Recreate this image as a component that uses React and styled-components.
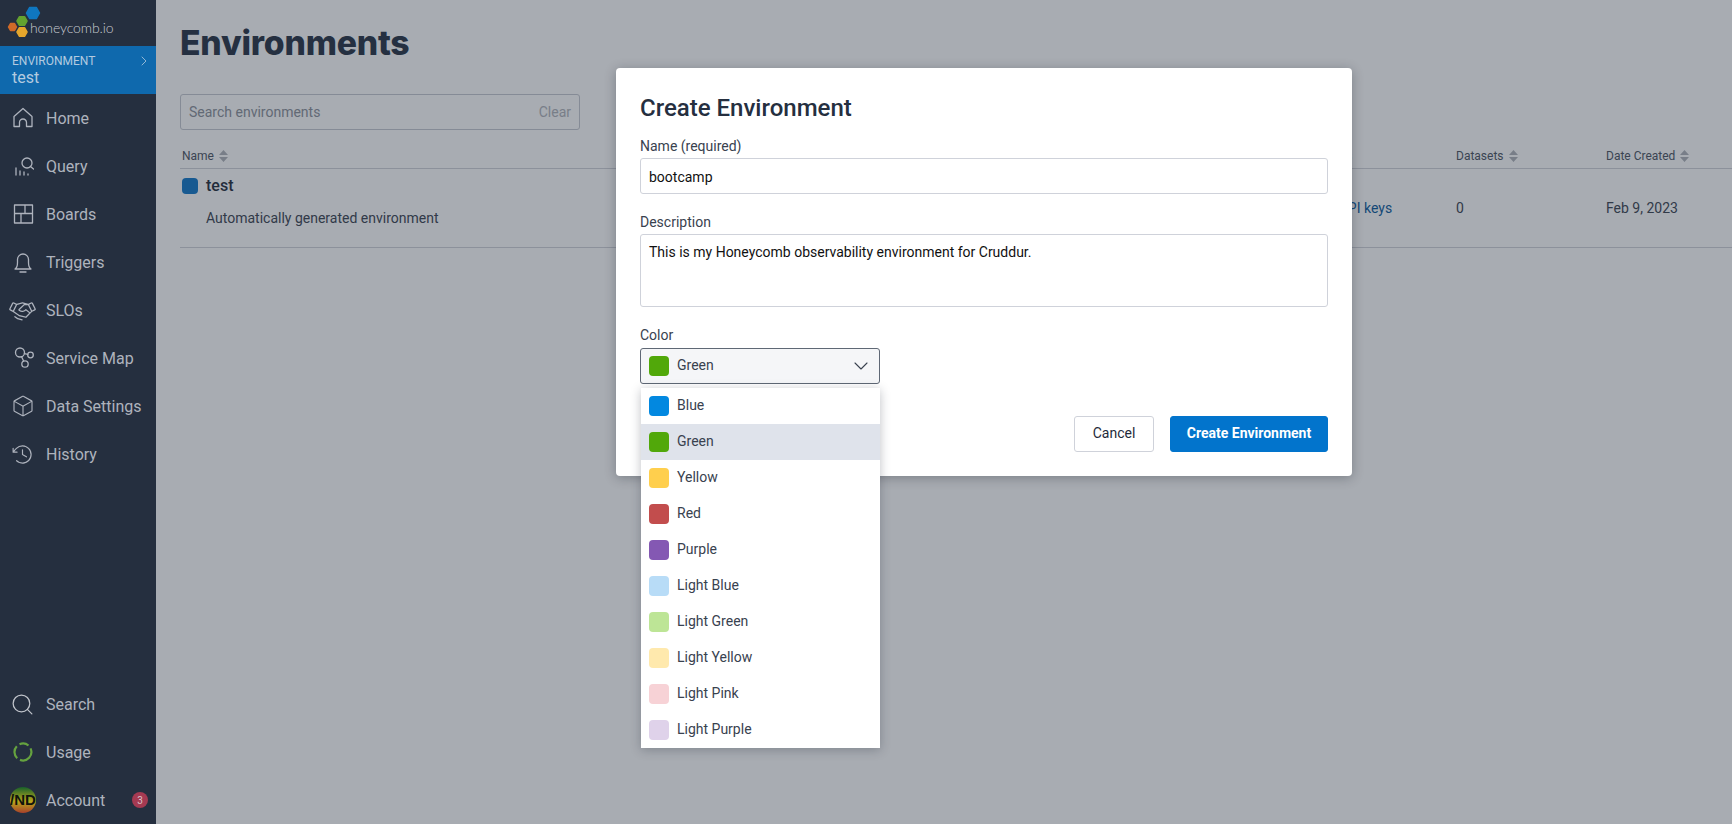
import React from "react";
import styled, { createGlobalStyle } from "styled-components";
import { Search, ChevronRight, ChevronDown } from "lucide-react";
import { PiHandshakeLight, PiCubeLight, PiClockCounterClockwiseLight } from "react-icons/pi";

const Global = createGlobalStyle`
  * { box-sizing: border-box; }
  html, body { margin: 0; height: 100%; }
  body { font-family: Roboto, "Liberation Sans", sans-serif; background: #fff; overflow: hidden; }
`;

const Page = styled.div`display: flex; width: 1732px; height: 824px; overflow: hidden;`;
const Sidebar = styled.nav`width: 156px; flex: none; background: #252f3f; display: flex; flex-direction: column; color: #aeb3bd;`;
const LogoBar = styled.div`height: 46px; display: flex; align-items: flex-start; position: relative;`;
const LogoMark = styled.svg`width: 38px; height: 40px; flex: none; margin-left: 6px;`;
const LogoText = styled.span`
  font-family: Lato, sans-serif; font-weight: 300; font-size: 14px; letter-spacing: -.1px; color: #c5c9d0;
  margin: 18px 0 0 -14px; line-height: 20px;
`;
const EnvBar = styled.div`height: 48px; background: #0f69ad; padding: 8px 12px 0; position: relative; color: #b3cbe0;`;
const EnvLabel = styled.div`font-size: 12px; line-height: 14px;`;
const EnvName = styled.div`font-size: 16px; line-height: 19px;`;
const EnvChevron = styled.span`position: absolute; right: 4px; top: 7px; display: flex;`;
const NavList = styled.div`display: flex; flex-direction: column;`;
const NavItem = styled.div`height: 48px; display: flex; align-items: center; font-size: 16px; color: #aeb3bd; position: relative;`;
const IconSlot = styled.span`width: 46px; flex: none; display: flex; justify-content: center; padding-right: 1px; color: #aeb3bd;`;
const Spacer = styled.div`flex: 1;`;
const BottomList = styled.div`display: flex; flex-direction: column;`;
const Badge = styled.span`
  position: absolute; right: 8px; top: 16px; width: 16px; height: 16px; border-radius: 50%;
  background: #a53a52; color: #d8c2c8; font-size: 10px; display: flex; align-items: center; justify-content: center;
`;

const Main = styled.main`flex: 1; position: relative; padding: 0 0 0 24px; background: #fff; color: #1f2a3a; min-width: 0;`;
const Title = styled.h1`
  margin: 0; padding-top: 23px; font-family: Inter, sans-serif; font-weight: 800; font-size: 33.7px; line-height: 39px; color: #263143;
  letter-spacing: -.2px;
`;
const SearchBox = styled.div`
  margin-top: 32px; width: 400px; height: 36px; border: 1px solid #c5c9d0; border-radius: 3px; display: flex;
  align-items: center; justify-content: space-between; padding: 0 8px; font-size: 14px; color: #8a8f99;
`;
const ClearLabel = styled.span`color: #b0b3ba;`;
const columns = "1123px 151px 150px 1fr";
const TableHead = styled.div`
  margin-top: 17px; height: 22px; display: grid; grid-template-columns: ${columns}; border-bottom: 1px solid #d0d3d9;
  padding-left: 2px; font-size: 12px; color: #4a5361;
`;
const HeadCell = styled.div`display: flex; align-items: flex-start; gap: 5px; line-height: 14px; padding-top: 2px;`;
const SortIcon = styled.svg`width: 9px; height: 12px; margin-top: 1px;`;
const Row = styled.div`
  height: 79px; display: grid; grid-template-columns: ${columns}; border-bottom: 1px solid #d0d3d9;
  padding-left: 2px; font-size: 14px; color: #39424f;
`;
const NameCell = styled.div`display: flex; flex-direction: column;`;
const NameLine = styled.div`display: flex; align-items: center; gap: 8px; margin-top: 8px; font-size: 16px; font-weight: 500; color: #1f2a3a; line-height: 18px;`;
const Swatch = styled.span`width: ${p => p.$size || 20}px; height: ${p => p.$size || 20}px; border-radius: 4px; background: ${p => p.$color}; flex: none;`;
const Description = styled.div`margin: 14px 0 0 24px; line-height: 18px;`;
const ValueCell = styled.div`padding-top: 30px; line-height: 18px;`;
const LinkCell = styled(ValueCell)`color: #07599c;`;

const Overlay = styled.div`position: absolute; inset: 0; background: rgba(37, 47, 63, .4); padding: 68px 0 0 460px;`;
const Modal = styled.div`
  width: 736px; height: 408px; background: #fff; border-radius: 4px; padding: 25px 24px 0; position: relative;
  box-shadow: 0 2px 12px rgba(20, 25, 35, .3);
`;
const ModalTitle = styled.h2`margin: 0; font-size: 24px; font-weight: 500; line-height: 30px; color: #252f3f;`;
const Label = styled.div`font-size: 14px; line-height: 18px; color: #39424f; margin-bottom: 3px;`;
const Field = styled.div`margin-top: ${p => p.$top}px;`;
const TextInput = styled.div`
  width: 688px; height: ${p => p.$h}px; border: 1px solid #cfd2da; border-radius: 3px; padding: ${p => p.$pad}px 8px;
  font-size: 14px; line-height: 18px; color: #111;
`;
const SelectButton = styled.div`
  width: 240px; height: 36px; margin-top: 4px; border: 1px solid #5f6875; border-radius: 3px; background: #f5f6f8; display: flex; align-items: center;
  padding: 0 8px; gap: 8px; font-size: 14px; color: #39424f; position: relative;
`;
const SelectChevron = styled.span`position: absolute; right: 6px; top: 5px; display: flex; color: #39424f;`;
const Menu = styled.div`
  position: absolute; left: 25px; top: 320px; width: 239px; background: #fff; z-index: 2;
  box-shadow: 0 2px 10px rgba(30, 35, 50, .28);
`;
const MenuRow = styled.div`
  height: 36px; display: flex; align-items: center; gap: 8px; padding-left: 8px; font-size: 14px; color: #39424f;
  background: ${p => p.$active ? "#dfe3eb" : "#fff"};
`;
const OptionText = styled.span`padding-bottom: 2px;`;
const Actions = styled.div`position: absolute; right: 24px; bottom: 24px; display: flex; gap: 16px;`;
const Button = styled.div`
  height: 36px; border-radius: 3px; display: flex; align-items: center; justify-content: center; font-size: 14px; padding-bottom: 2px;
  width: ${p => p.$primary ? 158 : 80}px;
  font-weight: ${p => p.$primary ? 700 : 400};
  color: ${p => p.$primary ? "#fff" : "#1f2a3a"};
  background: ${p => p.$primary ? "#0274cc" : "#fff"};
  border: 1px solid ${p => p.$primary ? "#0274cc" : "#cfd2da"};
`;

const Sort = () => (
  <SortIcon viewBox="0 0 9 12"><path d="M4.500 0 9 5H0z M0 7h9l-4.500 5z" fill="#b0b3ba" /></SortIcon>
);

const stroke = { fill: "none", stroke: "currentColor", strokeWidth: 1.3, strokeLinecap: "round", strokeLinejoin: "round" };

const HomeIcon = () => (
  <svg width="24" height="24" viewBox="0 0 24 24" {...stroke}>
    <path d="M3 20.500V10.500L12 2.500l9 8v10h-5.500v-4a3.500 3.500 0 0 0-7 0v4z" />
  </svg>
);
const QueryIcon = () => (
  <svg width="22" height="22" viewBox="0 0 22 22" {...stroke}>
    <circle cx="15" cy="8" r="5" /><path d="M18.500 11.500l3 2.500M4 20v-7M8 20v-4M12 20v-3M16 20v-1" />
  </svg>
);
const BoardsIcon = () => (
  <svg width="22" height="22" viewBox="0 0 22 22" {...stroke} strokeLinecap="butt">
    <path d="M2.500 2h18v18h-18zM2.500 10.500h18M13 2v8.500M9 10.500V20" />
  </svg>
);
const BellIcon = () => (
  <svg width="24" height="24" viewBox="0 0 24 24" {...stroke}>
    <path d="M4 19c1.700-1 2.500-3 2.500-6.500V9.500a5.500 5.500 0 0 1 11 0v3c0 3.500.8 5.500 2.500 6.500z" /><path d="M9 22h6" />
  </svg>
);
const MapIcon = () => (
  <svg width="22" height="22" viewBox="0 0 22 22" {...stroke}>
    <circle cx="8" cy="5.500" r="4.500" /><circle cx="18.500" cy="8" r="2.800" /><circle cx="13" cy="17" r="3.200" />
    <path d="M12.400 6.600l3.400.8M9.600 9.700l2 4.400" />
  </svg>
);
const UsageIcon = () => (
  <svg width="20" height="20" viewBox="0 0 20 20" fill="none" stroke="#65a23f" strokeWidth="2.200">
    <path d="M3.800 4.200a8.400 8.400 0 0 0 .4 12M7 17.900a8.400 8.400 0 0 0 10.500-11.500M15.500 3.500A8.400 8.400 0 0 0 6.500 2.300" />
  </svg>
);
const AvatarIcon = () => (
  <svg width="26" height="26" viewBox="0 0 26 26">
    <defs>
      <linearGradient id="av" x1="0" y1="0" x2="0" y2="1">
        <stop offset="0" stopColor="#17602a" /><stop offset=".55" stopColor="#b9a81c" /><stop offset="1" stopColor="#a8402a" />
      </linearGradient>
    </defs>
    <circle cx="13" cy="13" r="13" fill="url(#av)" />
    <text x="13" y="18" textAnchor="middle" fontFamily="Liberation Sans Narrow, Liberation Sans" fontWeight="700" fontSize="15" fill="#10140c">/ND</text>
  </svg>
);

const nav = [
  ["Home", <HomeIcon />],
  ["Query", <QueryIcon />],
  ["Boards", <BoardsIcon />],
  ["Triggers", <BellIcon />],
  ["SLOs", <PiHandshakeLight size={27} />],
  ["Service Map", <MapIcon />],
  ["Data Settings", <PiCubeLight size={24} />],
  ["History", <PiClockCounterClockwiseLight size={25} />],
];

const colors = [
  ["Blue", "#0288e0"], ["Green", "#51a80a"], ["Yellow", "#ffcf4d"], ["Red", "#c24d4d"], ["Purple", "#8458b3"],
  ["Light Blue", "#b8dcf7"], ["Light Green", "#bde596"], ["Light Yellow", "#ffe9ad"], ["Light Pink", "#f7d2d6"], ["Light Purple", "#dfd2ea"],
];

const hex = (cx, cy, r) =>
  [0, 60, 120, 180, 240, 300]
    .map(a => `${(cx + r * Math.cos((a * Math.PI) / 180)).toFixed(1)},${(cy + r * Math.sin((a * Math.PI) / 180)).toFixed(1)}`)
    .join(" ");

export default function App() {
  return (
    <Page>
      <Global />
      <Sidebar>
        <LogoBar>
          <LogoMark viewBox="0 0 38 40">
            <polygon points={hex(27, 13, 6.500)} fill="#0f77c0" stroke="#0f77c0" strokeWidth="1.500" strokeLinejoin="round" />
            <polygon points={hex(16, 21, 5)} fill="#64a32f" stroke="#64a32f" strokeWidth="1.500" strokeLinejoin="round" />
            <polygon points={hex(6.500, 27, 4)} fill="#cf6a28" stroke="#cf6a28" strokeWidth="1.500" strokeLinejoin="round" />
            <polygon points={hex(16, 32, 5)} fill="#e6a72c" stroke="#e6a72c" strokeWidth="1.500" strokeLinejoin="round" />
          </LogoMark>
          <LogoText>honeycomb.io</LogoText>
        </LogoBar>
        <EnvBar>
          <EnvLabel>ENVIRONMENT</EnvLabel>
          <EnvName>test</EnvName>
          <EnvChevron><ChevronRight size={16} strokeWidth={1.200} /></EnvChevron>
        </EnvBar>
        <NavList>
          {nav.map(([label, icon]) => (
            <NavItem key={label}><IconSlot>{icon}</IconSlot>{label}</NavItem>
          ))}
        </NavList>
        <Spacer />
        <BottomList>
          <NavItem><IconSlot><Search size={25} strokeWidth={1.200} color="#c0c4cb" /></IconSlot>Search</NavItem>
          <NavItem><IconSlot><UsageIcon /></IconSlot>Usage</NavItem>
          <NavItem><IconSlot><AvatarIcon /></IconSlot>Account<Badge>3</Badge></NavItem>
        </BottomList>
      </Sidebar>
      <Main>
        <Title>Environments</Title>
        <SearchBox><span>Search environments</span><ClearLabel>Clear</ClearLabel></SearchBox>
        <TableHead>
          <HeadCell>Name <Sort /></HeadCell>
          <HeadCell>API Keys</HeadCell>
          <HeadCell>Datasets <Sort /></HeadCell>
          <HeadCell>Date Created <Sort /></HeadCell>
        </TableHead>
        <Row>
          <NameCell>
            <NameLine><Swatch $size={16} $color="#0f77c9" />test</NameLine>
            <Description>Automatically generated environment</Description>
          </NameCell>
          <LinkCell>View API keys</LinkCell>
          <ValueCell>0</ValueCell>
          <ValueCell>Feb 9, 2023</ValueCell>
        </Row>
        <Overlay>
          <Modal>
            <ModalTitle>Create Environment</ModalTitle>
            <Field $top={14}>
              <Label>Name (required)</Label>
              <TextInput $h={36} $pad={9}>bootcamp</TextInput>
            </Field>
            <Field $top={19}>
              <Label>Description</Label>
              <TextInput $h={73} $pad={8}>This is my Honeycomb observability environment for Cruddur.</TextInput>
            </Field>
            <Field $top={19}>
              <Label>Color</Label>
              <SelectButton>
                <Swatch $color="#51a80a" /><OptionText>Green</OptionText>
                <SelectChevron><ChevronDown size={24} strokeWidth={1.100} /></SelectChevron>
              </SelectButton>
            </Field>
            <Menu>
              {colors.map(([name, c]) => (
                <MenuRow key={name} $active={name === "Green"}><Swatch $color={c} /><OptionText>{name}</OptionText></MenuRow>
              ))}
            </Menu>
            <Actions>
              <Button>Cancel</Button>
              <Button $primary>Create Environment</Button>
            </Actions>
          </Modal>
        </Overlay>
      </Main>
    </Page>
  );
}
